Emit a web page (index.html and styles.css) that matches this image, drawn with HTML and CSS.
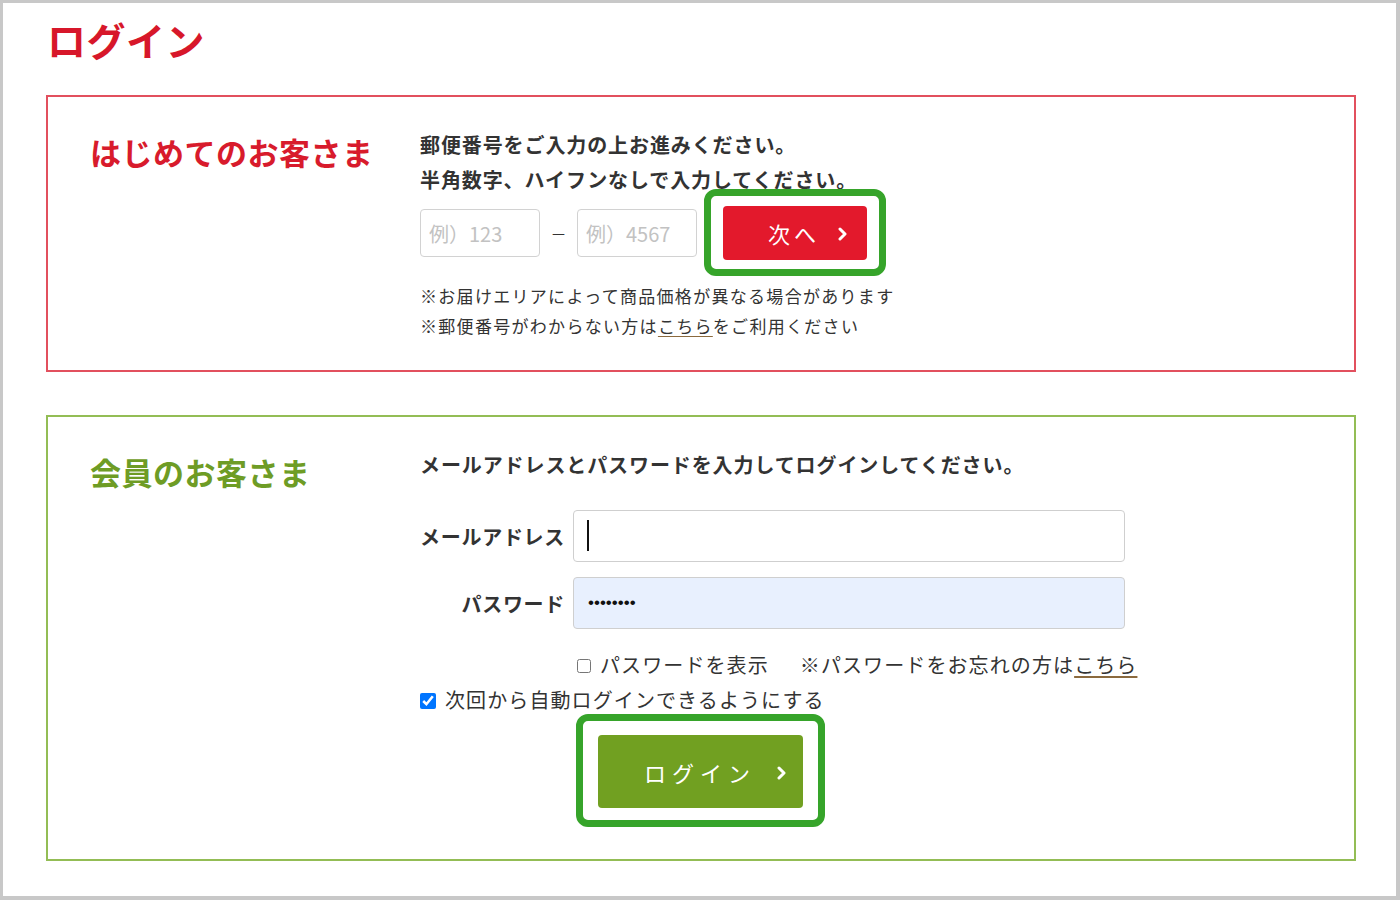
FILE: index.html
```html
<!DOCTYPE html>
<html lang="ja">
<head>
  <meta charset="UTF-8">
  <title>ログイン</title>
  <link rel="stylesheet" href="styles.css">
</head>
<body>
  <div class="page">
    <h1 class="title">ログイン</h1>

    <section class="panel panel-new">
      <h2 class="panel-title">はじめてのお客さま</h2>
      <div class="panel-body">
        <p class="lead">郵便番号をご入力の上お進みください。<br>半角数字、ハイフンなしで入力してください。</p>
        <div class="zip-row">
          <input type="text" class="zip" placeholder="例）123">
          <span class="dash">－</span>
          <input type="text" class="zip" placeholder="例）4567">
          <span class="mark mark-next">
            <button type="button" class="btn btn-red">次へ
              <svg class="chev" width="9" height="14" viewBox="0 0 9 14"><polyline points="2,2 7,7 2,12" fill="none" stroke="#fff" stroke-width="3" stroke-linecap="round" stroke-linejoin="round"/></svg>
            </button>
          </span>
        </div>
        <p class="note">※お届けエリアによって商品価格が異なる場合があります<br>※郵便番号がわからない方は<a href="#">こちら</a>をご利用ください</p>
      </div>
    </section>

    <section class="panel panel-member">
      <h2 class="panel-title">会員のお客さま</h2>
      <div class="panel-body">
        <p class="lead">メールアドレスとパスワードを入力してログインしてください。</p>
        <div class="form-row">
          <label class="form-label" for="mail">メールアドレス</label>
          <span class="field">
            <input type="text" id="mail" class="text-input">
            <span class="caret"></span>
          </span>
        </div>
        <div class="form-row">
          <label class="form-label" for="pass">パスワード</label>
          <span class="field">
            <input type="password" id="pass" class="text-input text-filled" value="password">
          </span>
        </div>
        <div class="opt-row opt-show">
          <label><input type="checkbox" class="check"> パスワードを表示</label>
          <span>※パスワードをお忘れの方は<a href="#">こちら</a></span>
        </div>
        <div class="opt-row opt-auto">
          <label><input type="checkbox" class="check" checked> 次回から自動ログインできるようにする</label>
        </div>
        <span class="mark mark-login">
          <button type="button" class="btn btn-green">ログイン
            <svg class="chev" width="9" height="14" viewBox="0 0 9 14"><polyline points="2,2 7,7 2,12" fill="none" stroke="#fff" stroke-width="3" stroke-linecap="round" stroke-linejoin="round"/></svg>
          </button>
        </span>
      </div>
    </section>
  </div>
</body>
</html>
```

FILE: styles.css
```css
html, body {
  margin: 0;
}
body {
  background: #c8c8c8;
  padding: 3px 4px 4px 3px;
  font-family: "Noto Sans CJK JP", "Noto Sans", sans-serif;
  color: #333;
}
.page {
  background: #fff;
  height: 893px;
  padding: 14px 0 0 43px;
  box-sizing: border-box;
}
.title {
  margin: 0 0 34px 1px;
  font-size: 39px;
  line-height: 44px;
  font-weight: bold;
  letter-spacing: 0.5px;
  color: #d7172a;
}
.panel {
  width: 1310px;
  box-sizing: border-box;
  display: flex;
  padding: 30px 40px 29px 42px;
  border: 2px solid #e2505e;
}
.panel-member {
  margin-top: 43px;
  border-color: #93bd55;
  padding-bottom: 1px;
}
.panel-title {
  width: 330px;
  flex: none;
  margin: 5px 0 0;
  font-size: 31px;
  line-height: 40px;
  font-weight: bold;
  letter-spacing: 0.5px;
  color: #d81b2c;
}
.panel-member .panel-title {
  color: #6e9c25;
}
.panel-body {
  flex: 1;
}
.lead {
  margin: 0;
  font-size: 20px;
  line-height: 35px;
  font-weight: bold;
  letter-spacing: 0.9px;
}
.zip-row {
  display: flex;
  align-items: center;
  margin-top: 9px;
}
.zip {
  width: 120px;
  height: 48px;
  box-sizing: border-box;
  border: 1px solid #d2d2d2;
  border-radius: 4px;
  padding: 0 8px;
  font-family: inherit;
  font-size: 20px;
}
.zip::placeholder {
  color: #c2c2c2;
}
.dash {
  width: 37px;
  text-align: center;
  font-size: 16px;
}
.mark {
  position: relative;
  display: inline-block;
}
.mark::after {
  content: "";
  position: absolute;
  border: 7px solid #36a42a;
  border-radius: 12px;
  pointer-events: none;
}
.mark-next {
  margin-left: 26px;
}
.mark-next::after {
  inset: -17px -19px -16px -19px;
}
.btn {
  display: flex;
  align-items: center;
  border: none;
  border-radius: 4px;
  color: #fff;
  font-family: inherit;
  font-size: 22px;
  letter-spacing: 4px;
  cursor: pointer;
}
.btn .chev {
  margin-top: 2px;
}
.btn-red {
  width: 144px;
  height: 54px;
  padding: 0 0 0 45px;
  background: #e3192c;
}
.btn-red .chev {
  margin-left: 18px;
}
.btn-green {
  width: 205px;
  height: 73px;
  padding: 0 0 0 46px;
  background: #71a021;
  letter-spacing: 6px;
}
.btn-green .chev {
  margin-left: 21px;
}
.note {
  margin: 21px 0 0;
  font-size: 17px;
  line-height: 30px;
  letter-spacing: 1.3px;
}
.note a, .opt-row a {
  color: #333;
  text-decoration-color: #8b6a3e;
  text-underline-offset: 3px;
}
.form-row {
  display: flex;
  align-items: center;
  gap: 8px;
  margin-top: 15px;
}
.lead + .form-row {
  margin-top: 28px;
}
.form-label {
  width: 145px;
  text-align: right;
  font-size: 20px;
  font-weight: bold;
  letter-spacing: 0.7px;
}
.field {
  position: relative;
  display: block;
}
.text-input {
  display: block;
  width: 552px;
  height: 52px;
  box-sizing: border-box;
  border: 1px solid #cfcfcf;
  border-radius: 4px;
  padding: 0 14px;
  font-family: "Liberation Sans", sans-serif;
  font-size: 17px;
  color: #111;
  outline: none;
}
.text-filled {
  background: #e8f0fe;
}
.caret {
  position: absolute;
  left: 14px;
  top: 10px;
  width: 2px;
  height: 31px;
  background: #111;
}
.opt-row {
  display: flex;
  align-items: center;
  font-size: 20px;
  line-height: 30px;
  letter-spacing: 1.1px;
}
.opt-row label {
  display: flex;
  align-items: center;
}
.opt-show {
  margin: 21px 0 0 157px;
  gap: 31px;
}
.opt-auto {
  margin-top: 5px;
}
.check {
  width: 14px;
  height: 14px;
  margin: 2px 9px 0 0;
}
.opt-auto .check {
  width: 16px;
  height: 16px;
  margin-right: 9px;
}
.mark-login {
  margin: 20px 0 50px 178px;
}
.mark-login::after {
  inset: -21px -22px -19px -22px;
}
```
